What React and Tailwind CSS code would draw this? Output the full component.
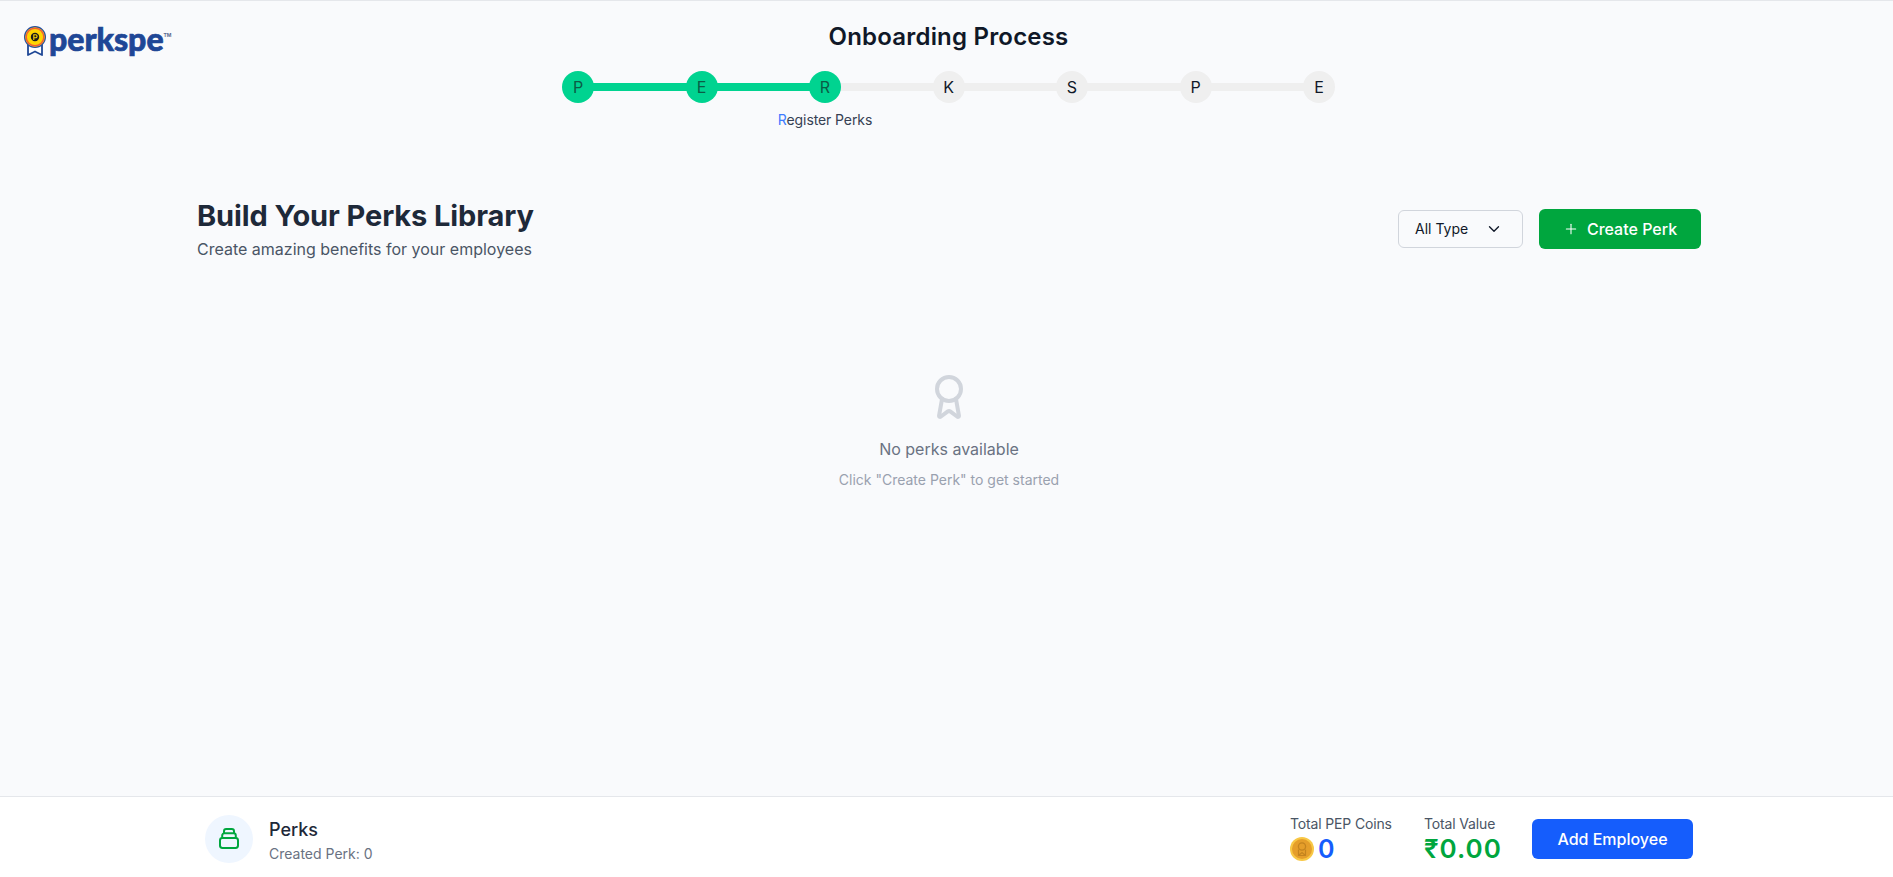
import { Award, ChevronDown, Plus } from "lucide-react";

const font = { fontFamily: "Inter, 'Noto Sans', sans-serif" };

const steps = [
  { l: "P", done: true },
  { l: "E", done: true },
  { l: "R", done: true, current: true },
  { l: "K" },
  { l: "S" },
  { l: "P" },
  { l: "E" },
];

function Logo() {
  return (
    <div className="flex items-center h-[30px] text-[#1f4796]">
      <svg width="24" height="31" viewBox="0 0 24 31" className="shrink-0">
        <path d="M5 16 V29 L12 25.5 L19 29 V16" fill="#fff" stroke="#1f4796" strokeWidth="1.8" strokeLinejoin="round" />
        <circle cx="12" cy="11" r="10.4" fill="#ffd500" stroke="#2a4f9e" strokeWidth="1.2" />
        <circle cx="12" cy="11" r="8.8" fill="none" stroke="#ef5a3a" strokeWidth="1.4" />
        <circle cx="12" cy="11" r="4.2" fill="#1b1b1b" />
        <path d="M10.8 14 V8.8 H12.6 a1.4 1.4 0 0 1 0 2.9 H10.8" fill="none" stroke="#ffd500" strokeWidth="1.1" />
      </svg>
      <span className="text-[32px] font-black leading-none -mt-[5px] ml-[2px] [-webkit-text-stroke:0.7px_#1f4796]" style={{ fontFamily: "Lato, sans-serif" }}>perkspe</span>
      <span className="text-[5px] font-bold self-start mt-[6px] text-[#5b6b90]">TM</span>
    </div>
  );
}

function Coin() {
  return (
    <svg width="24" height="24" viewBox="0 0 24 24" className="shrink-0">
      <circle cx="12" cy="12" r="12" fill="#f8c846" />
      <circle cx="12" cy="12" r="10" fill="#e59e2a" />
      <circle cx="12" cy="9.5" r="3.6" fill="none" stroke="#c4841f" strokeWidth="1.3" />
      <path d="M8.5 12.5 V18.5 H15.5 V12.5 M8.5 18.5 L12 15.5 L15.5 18.5" fill="none" stroke="#c4841f" strokeWidth="1.2" />
    </svg>
  );
}

function PerksIcon() {
  return (
    <svg width="20" height="21" viewBox="0 0 20 21" fill="none" stroke="#00a63e" strokeWidth="2" strokeLinejoin="round" className="mt-[-1px]">
      <rect x="1" y="10" width="18" height="10" rx="2.4" />
      <path d="M3.2 10 V7.4 A2.2 2.2 0 0 1 5.4 5.2 H14.6 A2.2 2.2 0 0 1 16.8 7.4 V10" />
      <path d="M5 5.2 V3.2 A2.2 2.2 0 0 1 7.2 1 H12.8 A2.2 2.2 0 0 1 15 3.2 V5.2" />
    </svg>
  );
}

export default function App() {
  return (
    <div className="h-[877px] overflow-hidden bg-[#f9fafc] flex flex-col border-t border-[#e5e7eb] pl-[5px]" style={font}>
      <header className="grid grid-cols-[1fr_auto_1fr]">
        <div className="pl-[18px] pt-[25px]">
          <Logo />
        </div>
        <div className="flex flex-col items-center pt-[20px] pr-[1px]">
          <h1 className="text-[24px] leading-[32px] font-semibold text-[#101828] tracking-[0.2px]">Onboarding Process</h1>
          <div className="w-[773px] flex items-center mt-[18px] mb-0">
            {steps.map((s, i) => (
              <div key={i} className={i === 0 ? "flex items-center" : "flex items-center flex-1"}>
                {i > 0 && <div className={s.done ? "flex-1 h-2 -mx-px bg-[#00d390]" : "flex-1 h-2 -mx-px bg-[#efefef]"} />}
                <div className={s.done ? "w-8 h-8 rounded-full bg-[#00d390] text-[#0b5c46] flex items-center justify-center text-[16px] relative" : "w-8 h-8 rounded-full bg-[#efefef] text-[#101828] flex items-center justify-center text-[16px] relative"}>
                  {s.l}
                  {s.current && (
                    <span className="absolute top-[40px] left-1/2 -translate-x-1/2 whitespace-nowrap text-[14px] leading-[18px] tracking-[-0.1px] text-[#364153]">
                      <span className="text-[#3f7bff]">R</span>egister Perks
                    </span>
                  )}
                </div>
              </div>
            ))}
          </div>
        </div>
        <div />
      </header>

      <main className="flex-1 w-[1504px] mx-auto pt-[95px]">
        <div className="flex items-start justify-between">
          <div>
            <h2 className="text-[29px] leading-[36px] font-bold text-[#1e2939] tracking-[-0.1px]">Build Your Perks Library</h2>
            <p className="text-[16px] leading-[24px] text-[#4a5565] mt-[3px]">Create amazing benefits for your employees</p>
          </div>
          <div className="flex items-center gap-4 pt-[11px]">
            <button className="w-[125px] h-[38px] rounded-md border border-[#d1d5dc] text-sm text-[#101828] flex items-center justify-between pl-4 pr-[19px]">
              All Type
              <ChevronDown size={18} strokeWidth={1.8} />
            </button>
            <button className="w-[162px] h-[40px] rounded-md bg-[#00a63e] text-white text-[16px] font-medium flex items-center justify-center gap-2">
              <Plus size={16} strokeWidth={1.6} />
              Create Perk
            </button>
          </div>
        </div>

        <div className="flex flex-col items-center mt-[112px]">
          <Award size={48} strokeWidth={2} className="text-[#d1d5dc]" />
          <p className="text-[16px] leading-[24px] text-[#6a7282] mt-[16px]">No perks available</p>
          <p className="text-sm leading-[20px] text-[#99a1af] mt-[9px]">Click "Create Perk" to get started</p>
        </div>
      </main>

      <footer className="-ml-[5px] pl-[5px] h-[81px] bg-white border-t border-[#e5e7eb] shrink-0">
        <div className="w-[1488px] mx-auto flex items-start justify-between pt-[18px]">
          <div className="flex items-start gap-4">
            <div className="w-12 h-12 rounded-full bg-[#eff6ff] flex items-center justify-center">
              <PerksIcon />
            </div>
            <div className="mt-[1px]">
              <div className="text-[18px] leading-[28px] font-medium text-[#1e2939]">Perks</div>
              <div className="text-sm leading-[20px] text-[#6a7282]">Created Perk: 0</div>
            </div>
          </div>
          <div className="flex items-start gap-8 -mt-[1px]">
            <div className="w-[102px]">
              <div className="text-sm leading-[20px] text-[#4a5565] tracking-[-0.15px] whitespace-nowrap">Total PEP Coins</div>
              <div className="flex items-center gap-[4px] -mt-[1px]">
                <Coin />
                <span className="text-[25px] leading-[32px] font-semibold text-[#155dfc]">0</span>
              </div>
            </div>
            <div className="w-[76px]">
              <div className="text-sm leading-[20px] text-[#4a5565] tracking-[-0.15px] whitespace-nowrap">Total Value</div>
              <div className="text-[26px] leading-[32px] font-semibold text-[#00a63e] -mt-[1px] tracking-[1px] whitespace-nowrap">₹0.00</div>
            </div>
            <button className="w-[161px] h-[40px] mt-[5px] rounded-md bg-[#155dfc] text-white text-[16px] font-medium">Add Employee</button>
          </div>
        </div>
      </footer>
    </div>
  );
}
